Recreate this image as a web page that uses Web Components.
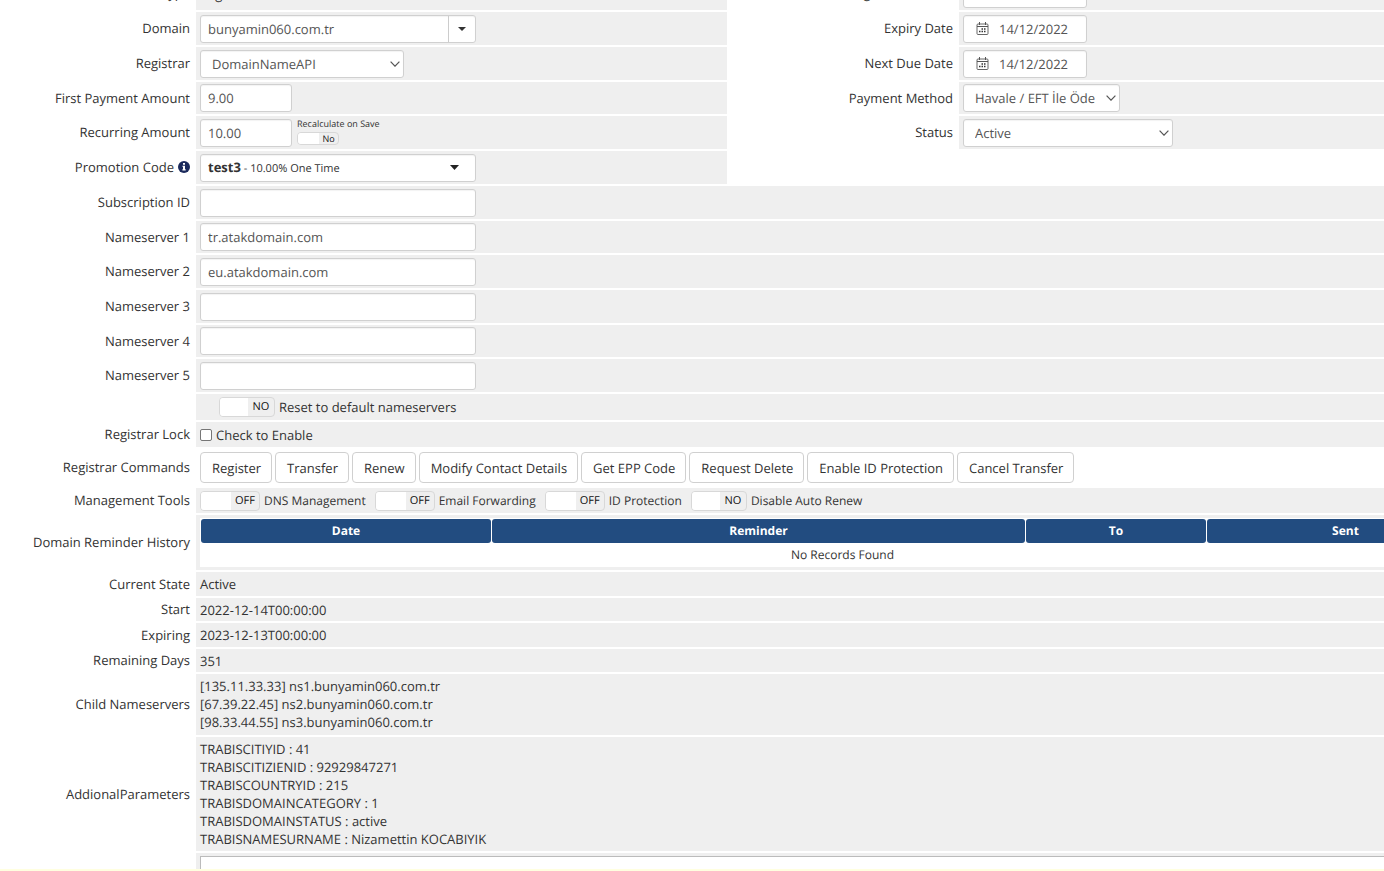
<!DOCTYPE html>
<html lang="en">
<head>
<meta charset="utf-8">
<title>Domain details</title>
<style>
  body { margin: 0; overflow: hidden; background: #fff; }
</style>
</head>
<body>
<domain-page></domain-page>

<script>
const base = `
  *, *::before { box-sizing: border-box; }
  input, select, button, textarea { font: inherit; text-rendering: inherit; color: #555; margin: 0; }
`;

class Base extends HTMLElement {
  connectedCallback() {
    if (this.shadowRoot) return;
    this.attachShadow({ mode: 'open' }).innerHTML = `<style>${base}${this.css()}</style>${this.html()}`;
  }
  attr(name) { return this.getAttribute(name) || ''; }
  css() { return ''; }
  html() { return '<slot></slot>'; }
}

/* One labelled line of the form. The control attribute picks what is drawn in the field cell. */
class FormRow extends Base {
  css() {
    return `
    :host { display: grid; grid-template-columns: var(--label-width) minmax(0, 1fr); min-height: var(--row-height, 33px); }
    :host([compact]) { min-height: 32px; }
    .name { display: flex; align-items: center; justify-content: flex-end; gap: 4px; padding: 0 6px 1px 0; text-align: right; }
    .cell { display: flex; align-items: center; gap: 5px; background: #efefef; padding: 0 4px; min-width: 0; }
    :host([plain]) .cell { background: #fff; }
    :host([indent]) .cell { padding-left: 23px; }
    :host([lines]) .cell { align-items: flex-start; padding-top: 3px; padding-bottom: 3px; }
    input[type=text], select, .combo {
      height: 28px; border: 1px solid #d0d0d0; border-radius: 3px; background: #fff; padding: 0 7px; width: 276px;
      box-shadow: inset 0 1px 1px rgba(0,0,0,.05);
    }
    input[type=text].money { width: 92px; }
    .combo { display: flex; padding: 0; }
    .combo input[type=text] { flex: 1; min-width: 0; height: 26px; border: 0; padding: 0 7px; background: none; box-shadow: none; }
    .combo button { width: 27px; border: 0; border-left: 1px solid #ccc; background: none; padding: 0; display: grid; place-items: center; }
    .over { display: inline-grid; align-items: center; }
    .over > * { grid-area: 1 / 1; }
    .over svg { pointer-events: none; }
    .over .end { justify-self: end; margin-right: 4px; }
    .over .start { justify-self: start; margin-left: 13px; }
    select { appearance: none; padding: 0 11px; }
    input[type=text].date { width: 124px; padding: 0 0 0 35px; }
    .combo.promo { align-items: center; padding: 0 16px 0 7px; color: #333; }
    .promo small { font-size: 11px; }
    .combo.promo button { all: unset; display: flex; align-items: center; justify-content: space-between; flex: 1; }
    input[type=checkbox] { appearance: none; width: 12px; height: 12px; border: 1px solid #767676; border-radius: 2px; background: #fff; }
    .tick { display: flex; align-items: center; gap: 4px; }
    textarea { display: block; width: 100%; height: 80px; border: 1px solid #bbb; background: #fff; resize: none; }
    :host([control=area]) { height: 16px; min-height: 0; overflow: hidden; }
    :host([control=area]) .cell { align-items: flex-start; padding-top: 3px; }
    `;
  }
  control() {
    const v = this.attr('value'), w = this.attr('width');
    const caret = '<svg width="9" height="5" viewBox="0 0 9 5"><path d="M0 0h9L4.500 5z" fill="#222"/></svg>';
    switch (this.attr('control')) {
      case 'text': return `<input id="c" type="text" value="${v}">`;
      case 'money': return `<input id="c" class="money" type="text" value="${v}">`;
      case 'combo': return `<div class="combo"><input id="c" type="text" value="${v}"><button type="button" aria-label="More domains"><svg width="8" height="4" viewBox="0 0 8 4"><path d="M0 0h8L4 4z" fill="#333"/></svg></button></div>`;
      case 'select': return `<div class="over"><select id="c" style="width:${w}px"><option>${v}</option></select>
        <svg class="end" width="10" height="6" viewBox="0 0 10 6"><path d="M.6.6 5 5.200 9.400.6" fill="none" stroke="#555" stroke-width="1.200"/></svg></div>`;
      case 'date': return `<div class="over"><input id="c" class="date" type="text" value="${v}">
        <svg class="start" width="13" height="13" viewBox="0 0 13 13"><rect x="1" y="2" width="11" height="10.500" rx="1" fill="none" stroke="#666"/><path d="M1 4.500h11M3.500 0v3M9.500 0v3" fill="none" stroke="#555"/><path d="M5.500 6.200H7v1.500H5.500zM8 6.200h1.500v1.500H8zM3 8.700h1.500v1.500H3zM5.500 8.700H7v1.500H5.500zM8 8.700h1.500v1.500H8z" fill="#333"/></svg></div>`;
      case 'promo': return `<div class="combo promo"><button id="c" type="button"><span><b>test3</b><small> - 10.00% One Time</small></span>${caret}</button></div>`;
      case 'tick': return `<span class="tick"><input id="c" type="checkbox"><label for="c">${v}</label></span>`;
      case 'area': return `<textarea id="c" aria-label="Notes"></textarea>`;
    }
    return '';
  }
  html() {
    const c = this.control(), tied = c && !['tick', 'area'].includes(this.attr('control'));
    const name = tied ? `<label for="c">${this.attr('label')}</label>` : `<span>${this.attr('label')}</span>`;
    const info = this.hasAttribute('info')
      ? '<svg width="12" height="12" viewBox="0 0 12 12"><circle cx="6" cy="6" r="6" fill="#1b2a5c"/><path d="M5 2.100h2v1.600H5zM4.400 4.700H7v3.600h.7v1.100H4.400V8.300H5V5.800h-.6z" fill="#fff"/></svg>' : '';
    return `<div class="name">${name}${info}</div><div class="cell">${c}<slot></slot></div>`;
  }
}
customElements.define('form-row', FormRow);

class ToggleSwitch extends Base {
  css() {
    return `
    :host { display: inline-block; --half: 30px; --tall: 20px; font-size: 12px; line-height: 16px; }
    :host([state=NO]) { --half: 28px; }
    :host([large]) { font-size: 13px; }
    :host([mini]) { --half: 21px; --tall: 13px; font-size: 9px; line-height: 11px; padding-bottom: 3px; }
    label { display: flex; align-items: center; gap: 4px; }
    :host([mini]) label { flex-direction: column-reverse; align-items: flex-start; gap: 3px; }
    .track { display: grid; grid-template-columns: var(--half) var(--half); height: var(--tall); border: 1px solid #d8d8d8; border-radius: 4px; overflow: hidden; width: calc(var(--half) * 2); }
    .track i { background: #fff; grid-area: 1 / 1; }
    .track b { grid-area: 1 / 2; font-weight: 400; font-size: 11px; color: #111; align-self: center; text-align: center; padding-right: 2px; line-height: 16px; }
    :host([mini]) b { font-size: 9px; line-height: 11px; }
    input { grid-area: 1 / 1 / 2 / 3; opacity: 0; width: 100%; height: 100%; appearance: none; }`;
  }
  html() {
    return `<label><span class="track"><i></i><b>${this.attr('state')}</b><input type="checkbox" role="switch"></span><span><slot></slot></span></label>`;
  }
}
customElements.define('toggle-switch', ToggleSwitch);

class CommandButton extends Base {
  css() {
    return `
    :host { display: block; }
    button { height: 31px; padding: 0 10px 0 11px; border: 1px solid #d0d0d0; border-radius: 4px; background: #fff; color: #333; white-space: nowrap; }`;
  }
  html() { return '<button type="button"><slot></slot></button>'; }
}
customElements.define('command-button', CommandButton);

class InlineGroup extends Base {
  css() { return ':host { display: flex; align-items: center; gap: var(--group-gap, 3px); }'; }
}
customElements.define('inline-group', InlineGroup);

class ReminderTable extends Base {
  css() {
    return `
    :host { display: block; flex: 1; font-size: 12px; line-height: 16px; }
    table { width: 100%; table-layout: fixed; border-spacing: 1px; background: #fff; }
    th { height: 24px; padding: 0; background: #224c80; color: #fff; border-radius: 3px; }
    td { height: 22px; padding: 0; text-align: center; }
    .date { width: 290px; } .to { width: 180px; } .sent { width: 277px; }`;
  }
  html() {
    return `<table><thead><tr><th class="date">Date</th><th>Reminder</th><th class="to">To</th><th class="sent">Sent</th></tr></thead>
      <tbody><tr><td colspan="4">No Records Found</td></tr></tbody></table>`;
  }
}
customElements.define('reminder-table', ReminderTable);

class FormPanel extends Base {
  css() { return ':host { display: flex; flex-direction: column; gap: 2px; }'; }
}
customElements.define('form-panel', FormPanel);

class DomainPage extends Base {
  css() {
    return `
    :host { display: block; overflow: hidden; color: #333; font: 13px/18px "Open Sans", "Noto Sans", sans-serif; text-rendering: geometricPrecision; --label-width: 196px; }
    /* The form is wider than the window and is scrolled past its first line. */
    form { width: calc(100% + 105px); margin-top: -23px; display: flex; flex-direction: column; gap: 2px; }
    .pair { display: grid; grid-template-columns: 727px minmax(0, 1fr); align-items: start; }
    .right { --label-width: 232px; }
    .switches { --row-height: 26px; }
    .commands { --row-height: 37px; }
    .tools, .lock { --row-height: 25px; --group-gap: 9px; }
    .history { --row-height: 55px; }
    .line { --row-height: 24px; }
    .short { --row-height: 23px; }
    .children { --row-height: 61px; }
    footer { height: 2px; background: #ffffe0; }`;
  }
  html() {
    return `
    <form>
      <div class="pair">
        <form-panel>
          <form-row label="Order Type">Register</form-row>
          <form-row label="Domain" control="combo" value="bunyamin060.com.tr"></form-row>
          <form-row label="Registrar" control="select" value="DomainNameAPI" width="204"></form-row>
          <form-row compact label="First Payment Amount" control="money" value="9.00"></form-row>
          <form-row label="Recurring Amount" control="money" value="10.00"><toggle-switch mini state="No">Recalculate on Save</toggle-switch></form-row>
          <form-row info label="Promotion Code" control="promo"></form-row>
        </form-panel>
        <form-panel class="right">
          <form-row label="Registration Date" control="date" value="14/12/2022"></form-row>
          <form-row label="Expiry Date" control="date" value="14/12/2022"></form-row>
          <form-row label="Next Due Date" control="date" value="14/12/2022"></form-row>
          <form-row compact label="Payment Method" control="select" value="Havale / EFT İle Öde" width="157"></form-row>
          <form-row label="Status" control="select" value="Active" width="210"></form-row>
        </form-panel>
      </div>
      <form-row label="Subscription ID" control="text"></form-row>
      <form-row compact label="Nameserver 1" control="text" value="tr.atakdomain.com"></form-row>
      <form-row label="Nameserver 2" control="text" value="eu.atakdomain.com"></form-row>
      <form-row label="Nameserver 3" control="text"></form-row>
      <form-row compact label="Nameserver 4" control="text"></form-row>
      <form-row label="Nameserver 5" control="text"></form-row>
      <form-row class="switches" indent><toggle-switch large state="NO">Reset to default nameservers</toggle-switch></form-row>
      <form-row class="lock" label="Registrar Lock" control="tick" value="Check to Enable"></form-row>
      <form-row class="commands" plain label="Registrar Commands"><inline-group>
        <command-button>Register</command-button><command-button>Transfer</command-button><command-button>Renew</command-button><command-button>Modify Contact Details</command-button><command-button>Get EPP Code</command-button><command-button>Request Delete</command-button><command-button>Enable ID Protection</command-button><command-button>Cancel Transfer</command-button>
      </inline-group></form-row>
      <form-row class="tools" label="Management Tools"><inline-group>
        <toggle-switch state="OFF">DNS Management</toggle-switch><toggle-switch state="OFF">Email Forwarding</toggle-switch><toggle-switch state="OFF">ID Protection</toggle-switch><toggle-switch state="NO">Disable Auto Renew</toggle-switch>
      </inline-group></form-row>
      <form-row class="history" label="Domain Reminder History"><reminder-table></reminder-table></form-row>
      <form-row class="line" label="Current State">Active</form-row>
      <form-row class="short" label="Start">2022-12-14T00:00:00</form-row>
      <form-row class="line" label="Expiring">2023-12-13T00:00:00</form-row>
      <form-row class="short" label="Remaining Days">351</form-row>
      <form-row class="children" lines label="Child Nameservers"><div>[135.11.33.33] ns1.bunyamin060.com.tr<br>[67.39.22.45] ns2.bunyamin060.com.tr<br>[98.33.44.55] ns3.bunyamin060.com.tr</div></form-row>
      <form-row lines label="AddionalParameters"><div>TRABISCITIYID : 41<br>TRABISCITIZIENID : 92929847271<br>TRABISCOUNTRYID : 215<br>TRABISDOMAINCATEGORY : 1<br>TRABISDOMAINSTATUS : active<br>TRABISNAMESURNAME : Nizamettin KOCABIYIK</div></form-row>
      <form-row control="area"></form-row>
    </form>
    <footer></footer>`;
  }
}
customElements.define('domain-page', DomainPage);
</script>
</body>
</html>
